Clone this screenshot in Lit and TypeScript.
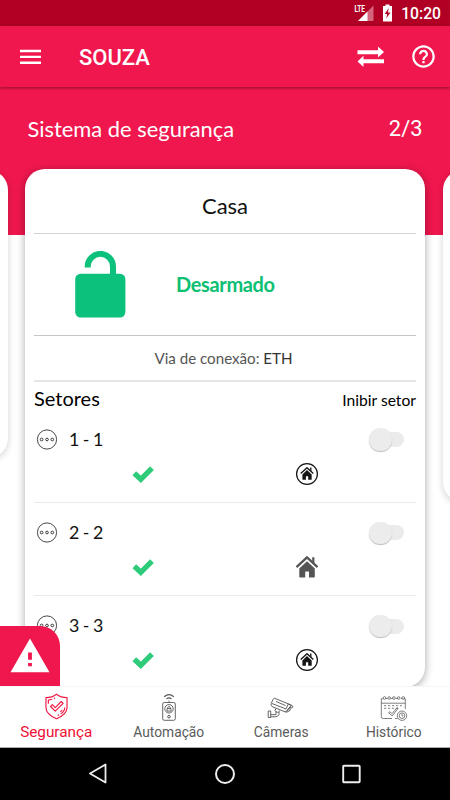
import { LitElement, html, css, svg } from "lit";
import { customElement, property } from "lit/decorators.js";

const menuIcon = html`<svg width="21" height="16" viewBox="0 0 21 16" fill="#fff"><path d="M0 .8h21v2.400H0zM0 6.700h21v2.400H0zM0 12.500h21v2.400H0z" /></svg>`;

const swapIcon = html`<svg width="28" height="22" viewBox="0 0 28 22" fill="#fff"><path d="M.5 4.200h20.500V.5l6 5.500-6 5.400V8.200H.5zM27 13.300H6.500V9.800L.5 15.400l6 5.500v-3.700H27z" /></svg>`;

const helpIcon = html`<svg width="27" height="27" viewBox="0 0 24 24" fill="#fff"><path d="M11 18h2v-2h-2v2zm1-16C6.480 2 2 6.480 2 12s4.480 10 10 10 10-4.480 10-10S17.520 2 12 2zm0 18c-4.410 0-8-3.590-8-8s3.590-8 8-8 8 3.590 8 8-3.590 8-8 8zm0-14c-2.210 0-4 1.790-4 4h2c0-1.100.9-2 2-2s2 .9 2 2c0 2-3 1.750-3 5h2c0-2.250 3-2.500 3-5 0-2.210-1.790-4-4-4z" /></svg>`;

const lockIcon = html`<svg width="52" height="68" viewBox="0 0 52 68"><path d="M12.700 16.500v-1a12.300 12.300 0 0 1 25.300 0V26" fill="none" stroke="#0cc17c" stroke-width="6" /><rect x=".2" y="22.700" width="50.200" height="43.800" rx="5.500" fill="#0cc17c" /></svg>`;

const dotsIcon = html`<svg width="26" height="25" viewBox="0 0 26 25" fill="none" stroke="#333"><circle cx="13" cy="12.500" r="9.600" stroke-width=".9" /><g stroke-width=".95"><circle cx="7.600" cy="12.500" r="1.350" /><circle cx="13" cy="12.500" r="1.350" /><circle cx="18.300" cy="12.500" r="1.350" /></g></svg>`;

const checkIcon = html`<svg width="24" height="20" viewBox="0 0 24 20"><path d="M3.300 9.200l6.500 6.100L21 4.100" fill="none" stroke="#2ecc7a" stroke-width="5.300" /></svg>`;

const houseShape = svg`<path d="M.5 11.200 11 1.300 21.500 11.200" fill="none" stroke="currentColor" stroke-width="2.300" stroke-linejoin="round" /><path d="M16.200 1.200h2.200v6.500l-2.200-2zM3.300 12.500 11 5.300l7.800 7.200v8.300q0 .7-.8.700h-5V15.500H9.200v6H4.100q-.8 0-.8-.8z" fill="currentColor" />`;

const houseIcon = html`<svg class="grey" width="24" height="24" viewBox="-1 -1 24 24">${houseShape}</svg>`;
const houseRingIcon = html`<svg class="dark" width="24" height="24" viewBox="0 0 24 24"><circle cx="12" cy="12" r="10.400" fill="none" stroke="currentColor" stroke-width="1.250" /><g transform="translate(5.400 4.900) scale(.6)">${houseShape}</g></svg>`;

const warningIcon = html`<svg width="40" height="35" viewBox="0 0 40 35"><path d="M20 .6 39.500 34.200H.5z" fill="#fff" /><path d="M18.100 14.500h3.800v7.200h-3.800zM18.100 25h3.800v3.300h-3.800z" fill="#ef174e" /></svg>`;

const shieldIcon = html`<svg width="23" height="27" viewBox="0 0 24 28" fill="none" stroke="currentColor" stroke-width="1.200" stroke-linejoin="round"><path d="M12 1.200C9 3.600 5 4.800 1 4.800V15c0 6 5 9.200 11 11.800C18 24.200 23 21 23 15V4.800C19 4.800 15 3.600 12 1.200z" /><path d="M3.500 11V7.300q2 0 4-.8M9.200 5.800l1.300-.6M20.600 15c0 3.700-2 5.300-4.300 6.700M14.700 22.600l-1.500.8M16 19.500l2-1.700" /><path d="M5.800 14l1.900-1.900 3 3 6.300-6.300 1.900 1.900-8.200 8.200z" /></svg>`;

const remoteIcon = html`<svg width="18" height="29" viewBox="0 0 18 29" fill="none" stroke="currentColor"><path d="M4.200 3.800q5-4.500 9.600 0M6.500 5.900q2.600-2.100 5 0" stroke-width="1.150" /><path d="M9 7.500V9.500" stroke-width=".8" /><rect x="2.700" y="9.500" width="12.600" height="17.800" rx="1.600" stroke-width=".9" /><circle cx="9" cy="15.800" r="4.200" stroke-width=".9" /><path d="M7.600 15.500v-1q1.400-2 2.800 0v1M7 15.600h4v2.500H7z" stroke-width=".9" /><circle cx="9" cy="23.700" r="1.300" /></svg>`;

const cameraIcon = html`<svg width="28" height="22" viewBox="0 0 28 22" fill="none" stroke="currentColor" stroke-width=".9" stroke-linejoin="round"><path d="M7.500 1.200 24.500 8.200 18.600 15 5.200 9.700Q3.500 8.300 4.200 6.500L6 2.500Q6.500 1.200 7.500 1.200z" /><path d="M5 6.500 19 12l2.300-5 4.800 2.400-1.200 1.700-2.200-.8-3.200 5-1.200-.5M22.700 10.500l.6 2.600-3 2M9 4.500l9.500 4" /><path d="M9 11.500l-1 2q2 3.500 5 .2M9 14.500v3.200H3.700M12 15v2.300q-1 2.500-3.500 2.500H3.700M1.200 14h2.500v6.500H1.200z" /></svg>`;

const calendarIcon = html`<svg width="28" height="26" viewBox="0 0 28 26" fill="none" stroke="currentColor" stroke-width=".75"><path d="M17.500 23.500H15M12 23.500H3.200Q1.300 23.500 1.300 21.500V3.800H3M25.300 14V3.800H24M1.300 8.200H25.300M6 3.500h1.500M11 3.500h1.500M16 3.500h1.500M21 3.500h1.300" /><circle cx="4.500" cy="3" r="1.350" /><circle cx="9.200" cy="3" r="1.350" /><circle cx="13.900" cy="3" r="1.350" /><circle cx="18.600" cy="3" r="1.350" /><circle cx="23.200" cy="3" r="1.350" /><path d="M4 10.700h18M4 13.300h15" stroke-dasharray="2.200 1.800" /><path d="M8.500 17.700l1.500-1 2 2 5-6 1 .8-5.800 7.400z" /><circle cx="22" cy="20.700" r="4.700" /><circle cx="22" cy="20.700" r="2.800" /><path d="M22 19v2h1.300" /></svg>`;

@customElement("sector-row")
class SectorRow extends LitElement {
  @property() label = "";
  @property({ type: Boolean }) ring = false;

  static styles = css`
    :host { display: block; height: 93.250px; box-sizing: border-box; border-bottom: 1px solid #eaeaea; }
    svg { display: block; flex: none; }
    .top { display: flex; align-items: center; height: 54px; padding: 5px 11px 0 0; box-sizing: border-box; }
    .name { flex: 1; margin: -1px 0 0 9px; font-size: 17.800px; color: #111; word-spacing: -1px; }
    .toggle { display: flex; align-items: center; width: 36px; height: 24px; padding-top: 1px; }
    .knob { width: 22.500px; height: 22.500px; border-radius: 50%; background: #ececec; box-shadow: 0 1px 1px #bdbdbd; z-index: 1; }
    .track { width: 20px; height: 15px; margin-left: -8px; border-radius: 0 8px 8px 0; background: #ebebeb; }
    .state { display: grid; grid-template-columns: 218px 67px; align-items: center; justify-items: center; height: 24px; margin-top: -2px; }
    .state > :last-child { justify-self: end; }
    .grey { color: #555; }
    .dark { color: #151515; }
  `;

  render() {
    return html`
      <div class="top">${dotsIcon}<span class="name">${this.label}</span><span class="toggle"><i class="knob"></i><i class="track"></i></span></div>
      <div class="state">${checkIcon}${this.ring ? houseRingIcon : houseIcon}</div>
    `;
  }
}

@customElement("app-root")
class AppRoot extends LitElement {
  static styles = css`
    :host { display: flex; flex-direction: column; width: 450px; height: 800px; overflow: hidden; background: #fff; font-family: Lato, sans-serif; color: #111; }
    * { box-sizing: border-box; }
    svg { display: block; flex: none; }
    .status { display: flex; align-items: center; justify-content: flex-end; height: 26px; flex: none; padding: 1px 9px 0 0; background: #b00024; color: #fff; font: 500 15.700px Roboto, sans-serif; }
    .status svg { margin: -1px 8px 0 0; }
    .lte { font: 700 9.500px "Roboto", sans-serif; }
    .bar { display: flex; align-items: center; height: 61px; flex: none; padding: 0 13px 0 20px; background: #ef174e; color: #fff; box-shadow: 0 1px 3px rgba(0, 0, 0, .4); z-index: 2; }
    .title { flex: 1; margin-left: 38px; font: 500 22px Roboto, sans-serif; padding-top: 2px; }
    .help { margin-left: 25px; }
    .heading { display: flex; justify-content: space-between; height: 148px; flex: none; padding: 28px 27.500px 0; background: #ef174e; color: #fff; font-size: 21.900px; line-height: 27px; }
    .count { font-family: Roboto, sans-serif; font-weight: 400; }
    .cards { display: flex; align-items: flex-start; justify-content: center; gap: 17.500px; height: 517px; margin: -66px -393px 0; flex: none; }
    .card { width: 400px; height: 518px; border-radius: 20px; background: #fff; flex: none; box-shadow: 0 2px 9px rgba(0, 0, 0, .35); padding: 0 9px; }
    .side { margin-top: 1px; box-shadow: 0 2px 7px rgba(0, 0, 0, .18); }
    .previous { height: 288px; }
    .next { height: 332px; }
    .name { height: 65px; padding-top: 23px; border-bottom: 1px solid #d4d4d4; text-align: center; font-size: 22px; line-height: 27px; }
    .armed { display: flex; align-items: center; height: 102px; border-bottom: 1.500px solid #c5c5c5; padding: 1px 0 0 41px; color: #0dbf73; font-size: 20px; font-weight: 700; }
    .armed span { margin: -2px 0 0 49px; letter-spacing: -.35px; }
    .connection { height: 46px; border-bottom: 2px solid #e6e6e6; text-align: center; font-size: 15.150px; line-height: 45px; color: #555; padding-right: 3px; }
    .connection b { font-weight: 400; color: #333; }
    .sectors { display: flex; justify-content: space-between; height: 27.500px; font-size: 20px; line-height: 33px; color: #000; }
    .sectors small { font-size: 15.650px; line-height: 37px; }
    .foot { position: relative; flex: none; height: 62px; display: grid; grid-template-columns: repeat(4, 112.500px); background: #fff; border-top: 1px solid #f7f7f7; border-bottom: 1px solid #aaa; z-index: 3; }
    .tab { display: flex; flex-direction: column; align-items: center; color: #5a5a5a; font: 13.800px/18px Roboto, sans-serif; padding-top: 6px; }
    .tab > i { display: flex; align-items: center; justify-content: center; height: 30px; padding-bottom: 1px; color: #555; }
    .tab.active { color: #ef0f35; font-size: 15.300px; }
    .tab.active > i { color: #ef1743; padding-bottom: 3px; }
    .alert { position: absolute; left: 0; bottom: 61px; width: 60px; height: 60px; border-radius: 0 20px 0 0; background: #ef174e; padding: 12px 10px; }
    .android { flex: 1; display: flex; justify-content: center; background: #000; padding-top: 15px; gap: 105px; }
  `;

  render() {
    return html`
      <div class="status">
        <svg width="20" height="20" viewBox="0 0 20 20"><path d="M4 18 19.500 2.500V18z" fill="#d4657c" /><path d="M4 18 13.500 8.500V18z" fill="#fff" /><path d="M0 1h11v9H0z" fill="#b00024" /><text class="lte" x=".5" y="8.800" fill="#fff" textLength="10.500" lengthAdjust="spacingAndGlyphs">LTE</text></svg>
        <svg width="11" height="18" viewBox="0 0 11 18"><path d="M1 2h2.500V.5h4V2H10v15.500H1z" fill="#fff" /><path d="M6.800 4 2.700 10h2.500L4.200 14.500 8.500 8.500H5.900z" fill="#b00024" /></svg>
        <span>10:20</span>
      </div>
      <div class="bar">${menuIcon}<span class="title">SOUZA</span>${swapIcon}<span class="help">${helpIcon}</span></div>
      <div class="heading"><span>Sistema de segurança</span><span class="count">2/3</span></div>
      <div class="cards">
        <div class="card side previous"></div>
        <div class="card">
          <div class="name">Casa</div>
          <div class="armed">${lockIcon}<span>Desarmado</span></div>
          <div class="connection">Via de conexão: <b>ETH</b></div>
          <div class="sectors">Setores<small>Inibir setor</small></div>
          <sector-row label="1 - 1" ring></sector-row>
          <sector-row label="2 - 2"></sector-row>
          <sector-row label="3 - 3" ring></sector-row>
        </div>
        <div class="card side next"></div>
      </div>
      <div class="foot">
        <div class="tab active"><i>${shieldIcon}</i>Segurança</div>
        <div class="tab"><i>${remoteIcon}</i>Automação</div>
        <div class="tab"><i>${cameraIcon}</i>Câmeras</div>
        <div class="tab"><i>${calendarIcon}</i>Histórico</div>
        <div class="alert">${warningIcon}</div>
      </div>
      <div class="android">
        <svg width="22" height="22" viewBox="0 0 22 22" fill="none" stroke="#eee" stroke-width="1.800"><path d="M18.500 1.500v18L3 10.500z" stroke-linejoin="round" /></svg>
        <svg width="22" height="22" viewBox="0 0 22 22" fill="none" stroke="#eee" stroke-width="2"><circle cx="11" cy="11" r="9" /></svg>
        <svg width="22" height="22" viewBox="0 0 22 22" fill="none" stroke="#eee" stroke-width="1.900"><rect x="2.200" y="2.800" width="16.500" height="16.500" rx=".8" /></svg>
      </div>
    `;
  }
}
